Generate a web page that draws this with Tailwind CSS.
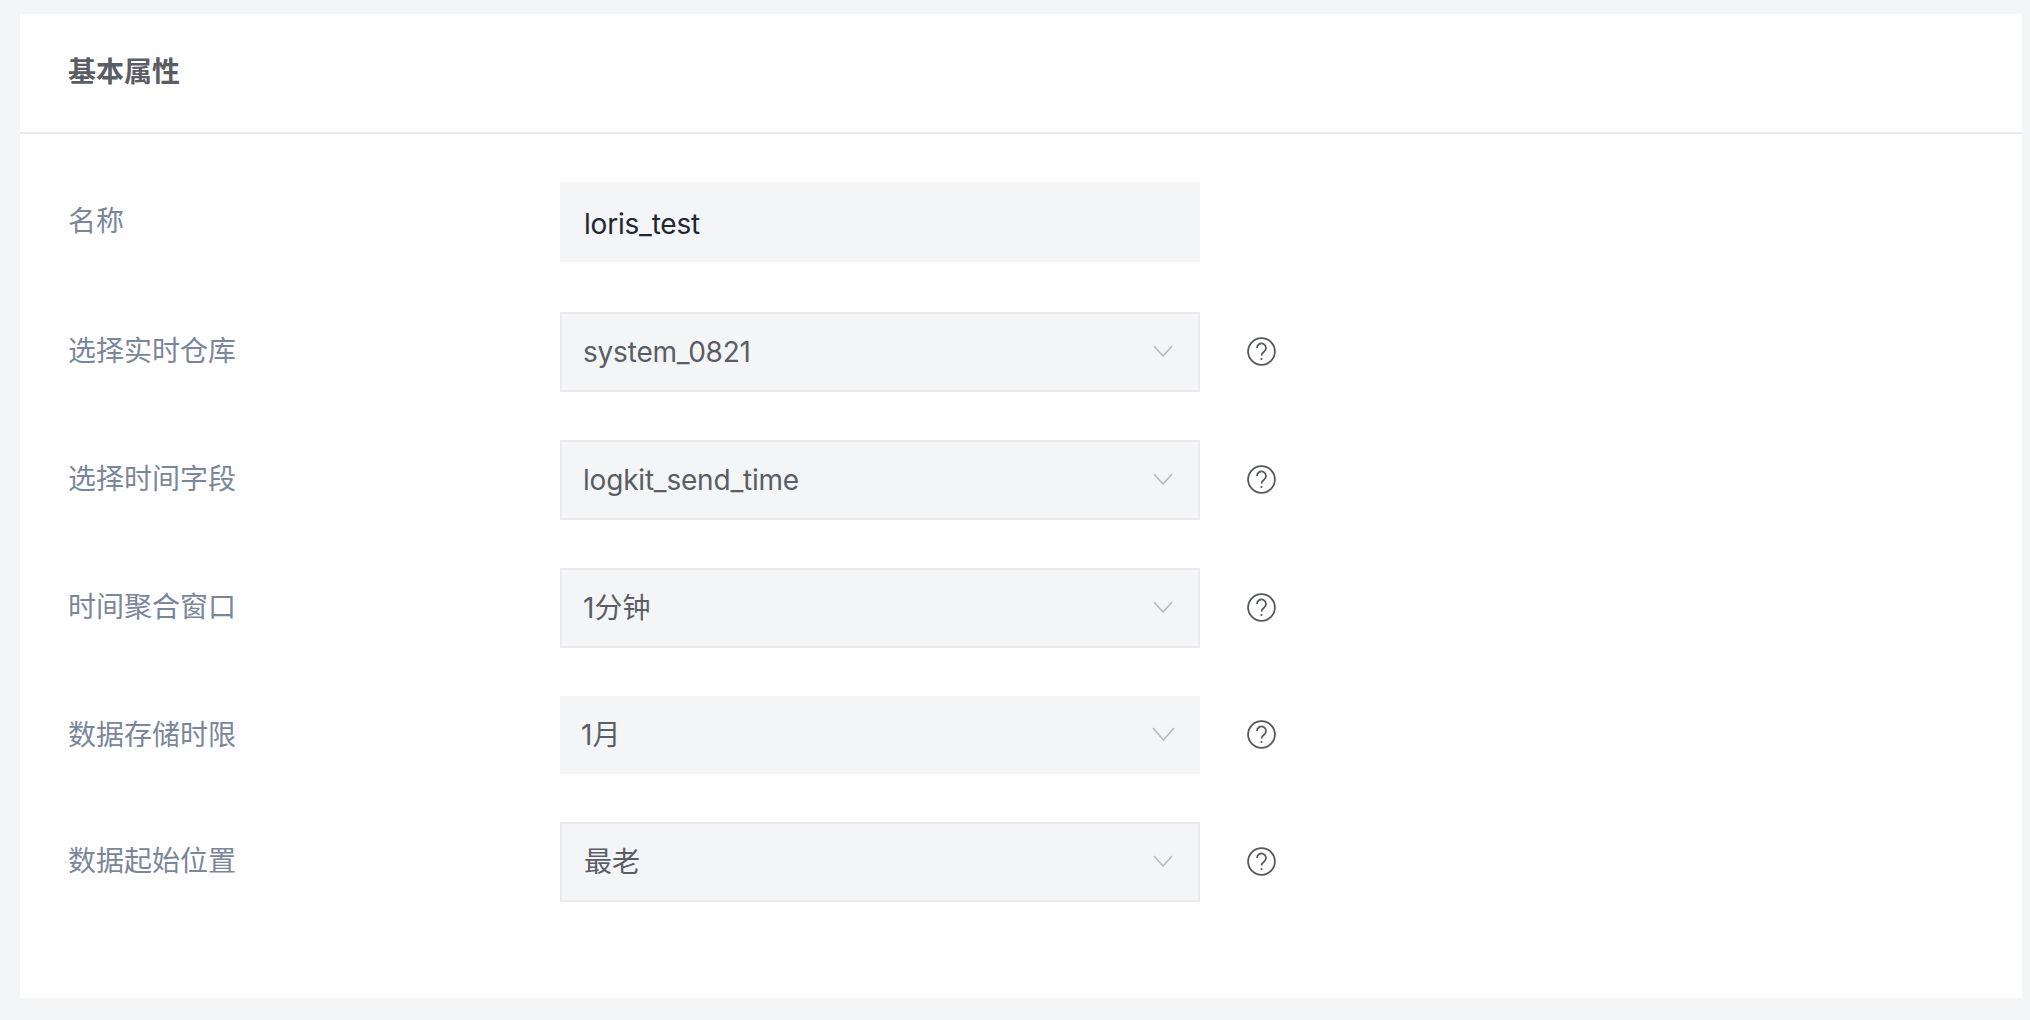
<!DOCTYPE html>
<html lang="zh">
<head>
  <meta charset="UTF-8">
  <title>基本属性</title>
  <script src="https://cdn.jsdelivr.net/npm/@tailwindcss/browser@4"></script>
</head>
<body class="bg-[#f4f5f7] font-['Inter','Noto_Sans_CJK_SC',sans-serif]">
  <div class="w-[2030px] h-[1020px] pt-[14px] pl-[20px] pr-[8px] overflow-hidden">
    <div class="bg-white h-[984px]">
      <!-- 标题 -->
      <div class="h-[118px] flex items-center pl-[48px] border-b-2 border-[#e9eaee] box-content">
        <h2 class="text-[28px] font-bold text-[#5a5d63] -mt-[2px]">基本属性</h2>
      </div>

      <div class="pt-[48px] pl-[48px]">
        <!-- 名称 -->
        <div class="flex h-[80px]">
          <label class="w-[492px] text-[28px] text-[#7a869a] leading-[78px]">名称</label>
          <div class="w-[640px] h-[80px] bg-[#f4f5f7] flex items-center pl-[24px] pt-[3px] text-[28px] tracking-[-0.2px] text-[#1f2733]">loris_test</div>
        </div>

        <!-- 选择实时仓库 -->
        <div class="flex items-center h-[80px] mt-[50px]">
          <label class="w-[492px] text-[28px] text-[#7a869a] leading-[78px] self-start">选择实时仓库</label>
          <div class="w-[640px] h-[80px] bg-[#f4f5f7] border-2 border-[#e9eaee] flex items-center justify-between pl-[21px] pr-[25px] text-[28px] tracking-[-0.2px] text-[#5a5d63]">
            <span>system_0821</span>
            <svg class="w-[20px] h-[13px] -mt-[2px]" viewBox="0 0 20 13" fill="none" stroke="#b9bcc2" stroke-width="1.8"><path d="M1 1l9 10 9-10"/></svg>
          </div>
          <svg class="w-[29px] h-[29px] ml-[47px] -mt-[2px]" viewBox="0 0 29 29" fill="none" stroke="#55585e" stroke-width="1.8"><circle cx="14.5" cy="14.5" r="13.4"/><path d="M10 11a4.500 4.500 0 1 1 7 3.700c-1.700 1.100-2.500 2-2.500 3.800"/><circle cx="14.500" cy="22" r="1.100" fill="#55585e" stroke="none"/></svg>
        </div>

        <!-- 选择时间字段 -->
        <div class="flex items-center h-[80px] mt-[48px]">
          <label class="w-[492px] text-[28px] text-[#7a869a] leading-[78px] self-start">选择时间字段</label>
          <div class="w-[640px] h-[80px] bg-[#f4f5f7] border-2 border-[#e9eaee] flex items-center justify-between pl-[21px] pr-[25px] text-[28px] tracking-[-0.2px] text-[#5a5d63]">
            <span>logkit_send_time</span>
            <svg class="w-[20px] h-[13px] -mt-[2px]" viewBox="0 0 20 13" fill="none" stroke="#b9bcc2" stroke-width="1.8"><path d="M1 1l9 10 9-10"/></svg>
          </div>
          <svg class="w-[29px] h-[29px] ml-[47px] -mt-[2px]" viewBox="0 0 29 29" fill="none" stroke="#55585e" stroke-width="1.8"><circle cx="14.5" cy="14.5" r="13.4"/><path d="M10 11a4.500 4.500 0 1 1 7 3.700c-1.700 1.100-2.500 2-2.500 3.800"/><circle cx="14.500" cy="22" r="1.100" fill="#55585e" stroke="none"/></svg>
        </div>

        <!-- 时间聚合窗口 -->
        <div class="flex items-center h-[80px] mt-[48px]">
          <label class="w-[492px] text-[28px] text-[#7a869a] leading-[78px] self-start">时间聚合窗口</label>
          <div class="w-[640px] h-[80px] bg-[#f4f5f7] border-2 border-[#e9eaee] flex items-center justify-between pl-[21px] pr-[25px] text-[28px] text-[#5a5d63]">
            <span>1分钟</span>
            <svg class="w-[20px] h-[13px] -mt-[2px]" viewBox="0 0 20 13" fill="none" stroke="#b9bcc2" stroke-width="1.8"><path d="M1 1l9 10 9-10"/></svg>
          </div>
          <svg class="w-[29px] h-[29px] ml-[47px] -mt-[2px]" viewBox="0 0 29 29" fill="none" stroke="#55585e" stroke-width="1.8"><circle cx="14.5" cy="14.5" r="13.4"/><path d="M10 11a4.500 4.500 0 1 1 7 3.700c-1.700 1.100-2.500 2-2.500 3.800"/><circle cx="14.500" cy="22" r="1.100" fill="#55585e" stroke="none"/></svg>
        </div>

        <!-- 数据存储时限 -->
        <div class="flex items-center h-[78px] mt-[48px]">
          <label class="w-[492px] text-[28px] text-[#7a869a] leading-[78px] self-start">数据存储时限</label>
          <div class="w-[640px] h-[78px] bg-[#f4f5f7] flex items-center justify-between pl-[21px] pr-[25px] text-[28px] text-[#5a5d63]">
            <span>1月</span>
            <svg class="w-[23px] h-[15px] -mt-[2px]" viewBox="0 0 23 15" fill="none" stroke="#b9bcc2" stroke-width="1.8"><path d="M1 1l10.500 12 10.500-12"/></svg>
          </div>
          <svg class="w-[29px] h-[29px] ml-[47px] -mt-[2px]" viewBox="0 0 29 29" fill="none" stroke="#55585e" stroke-width="1.8"><circle cx="14.5" cy="14.5" r="13.4"/><path d="M10 11a4.500 4.500 0 1 1 7 3.700c-1.700 1.100-2.500 2-2.500 3.800"/><circle cx="14.500" cy="22" r="1.100" fill="#55585e" stroke="none"/></svg>
        </div>

        <!-- 数据起始位置 -->
        <div class="flex items-center h-[80px] mt-[48px]">
          <label class="w-[492px] text-[28px] text-[#7a869a] leading-[78px] self-start">数据起始位置</label>
          <div class="w-[640px] h-[80px] bg-[#f4f5f7] border-2 border-[#e9eaee] flex items-center justify-between pl-[22px] pr-[25px] text-[28px] text-[#5a5d63]">
            <span>最老</span>
            <svg class="w-[20px] h-[13px] -mt-[2px]" viewBox="0 0 20 13" fill="none" stroke="#b9bcc2" stroke-width="1.8"><path d="M1 1l9 10 9-10"/></svg>
          </div>
          <svg class="w-[29px] h-[29px] ml-[47px] -mt-[2px]" viewBox="0 0 29 29" fill="none" stroke="#55585e" stroke-width="1.8"><circle cx="14.5" cy="14.5" r="13.4"/><path d="M10 11a4.500 4.500 0 1 1 7 3.700c-1.700 1.100-2.500 2-2.500 3.800"/><circle cx="14.500" cy="22" r="1.100" fill="#55585e" stroke="none"/></svg>
        </div>
      </div>
    </div>
  </div>
</body>
</html>
